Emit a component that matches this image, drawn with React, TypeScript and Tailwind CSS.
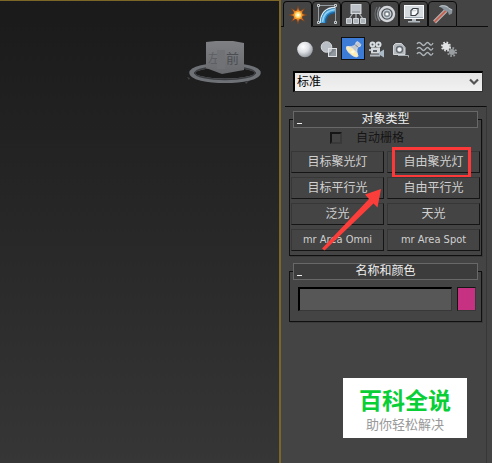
import { useState } from "react";
import type { ReactNode } from "react";
import clsx from "clsx";

type Item = { label: string; icon: ReactNode };

const tabs: Item[] = [
  {
    label: "创建",
    icon: (
      <svg viewBox="0 0 22 22" className="size-[22px]">
        <path
          d="M11 2l1.600 5.200L17.500 4.500 14.800 9.400 20 11l-5.200 1.600 2.700 4.900-4.900-2.700L11 20l-1.600-5.200-4.900 2.700 2.700-4.900L2 11l5.200-1.600L4.500 4.500l4.900 2.700z"
          fill="#dc7426"
          stroke="#6b4024"
          strokeWidth=".8"
        />
        <circle cx="11" cy="11" r="4.500" fill="#f99d2c" />
        <circle cx="11" cy="11" r="3" fill="#ffe07a" />
        <circle cx="11" cy="11" r="1.500" fill="#fffde8" />
      </svg>
    ),
  },
  {
    label: "修改",
    icon: (
      <svg viewBox="0 0 22 22" className="size-[22px]">
        <path d="M2.500 19.500v-17h17v17" fill="none" stroke="#969da2" />
        <path d="M4.500 20C4.500 10 10 4.500 19 4.500" fill="none" stroke="#dcecf5" strokeWidth="1.500" />
        <path d="M7 20C7 12 11.500 7.500 19 7.500" fill="none" stroke="#3f9bd8" strokeWidth="4.500" />
        <path d="M6.500 19C7 11 11 7.500 19 6.500" fill="none" stroke="#8ed0f4" strokeWidth="1.500" />
        <path d="M9.500 20C9.500 13 13 10 19 9.500" fill="none" stroke="#19639e" strokeWidth="1.500" />
        <path d="M1.500 1.500h2v2h-2zM18.500 1.500h2v2h-2zM1.500 18.500h2v2h-2zM18.500 18.500h2v2h-2z" fill="#444" stroke="#c8d0d4" />
      </svg>
    ),
  },
  {
    label: "层次",
    icon: (
      <svg viewBox="0 0 22 22" className="size-[22px]">
        <path d="M8 10l-4 6M11 10v6M14 10l4 6" fill="none" stroke="#aeb4b9" strokeWidth="1.200" />
        <rect x="6" y="1.500" width="10" height="9" fill="#bcc2c7" stroke="#d6dadd" />
        <path d="M7 8h8v2H7z" fill="#9ba1a7" />
        <path d="M1.500 15.500h5v5h-5zM8.500 15.500h5v5h-5zM15.500 15.500h5v5h-5z" fill="#aeb5ba" stroke="#d0d5d9" />
      </svg>
    ),
  },
  {
    label: "运动",
    icon: (
      <svg viewBox="0 0 22 22" className="size-[22px]">
        <path d="M3 4Q-1 11 3 18" fill="none" stroke="#666b70" strokeWidth="1.200" />
        <path d="M6 4Q1 11 6 18" fill="none" stroke="#8c9298" strokeWidth="1.400" />
        <circle cx="13" cy="11" r="7" fill="#4d5156" stroke="#d3d7db" strokeWidth="2.400" />
        <circle cx="13" cy="11" r="3.800" fill="#7f878e" stroke="#cbd4db" strokeWidth="1.300" />
        <circle cx="13" cy="11" r="1.600" fill="#fff" />
      </svg>
    ),
  },
  {
    label: "显示",
    icon: (
      <svg viewBox="0 0 22 22" className="size-[22px]">
        <rect x="1.500" y="2.500" width="19" height="13" fill="#d6dbdf" stroke="#f9fafb" />
        <path d="M2 14.500h18" stroke="#9da8b1" />
        <path d="M9 16h4v2H9zM5 18h12v1.500H5z" fill="#b1b8be" />
        <path d="M8 12.500v-5l2-2h5v4.500l-2.500 2.500z" fill="#f8fafb" stroke="#383e43" strokeWidth="1.200" />
        <path d="M8.500 7.800h4l2-2" fill="none" stroke="#9aa2a8" strokeWidth=".6" />
      </svg>
    ),
  },
  {
    label: "实用程序",
    icon: (
      <svg viewBox="0 0 22 22" className="size-[22px]">
        <path d="M2.500 19L14 7.500" stroke="#b4b2b2" strokeWidth="4" />
        <path d="M2.500 19L14 7.500" stroke="#c76251" strokeWidth="1.800" />
        <path d="M7 3.500C10 1 15 1.500 17.500 5l3 1.500-.5 4-3 1.500-1-3-3.500-1.500L10 5z" fill="#8b959d" />
        <path d="M7.500 3.500C11 2 15 3 17 5.500l3 1.500" fill="none" stroke="#bcc5cc" />
      </svg>
    ),
  },
];

const tools: Item[] = [
  {
    label: "几何体",
    icon: (
      <svg viewBox="0 0 24 24" className="size-6">
        <defs>
          <radialGradient id="ball" cx=".38" cy=".32" r=".72">
            <stop stopColor="#fff" />
            <stop offset=".5" stopColor="#dde0e4" />
            <stop offset="1" stopColor="#8f949c" />
          </radialGradient>
        </defs>
        <circle cx="12" cy="12.500" r="7.800" fill="url(#ball)" />
      </svg>
    ),
  },
  {
    label: "图形",
    icon: (
      <svg viewBox="0 0 24 24" className="size-6">
        <circle cx="9.500" cy="10" r="5.300" fill="#b9bec4" stroke="#d5d9dd" />
        <rect x="11.500" y="11.500" width="8" height="8" fill="#7d838b" stroke="#dfe2e6" />
        <path d="M12 15.500c1.500 0 3-1 3-3.500h-3z" fill="#c5c9ce" />
        <path d="M12 19l7-7v7z" fill="#9298a0" />
      </svg>
    ),
  },
  {
    label: "灯光",
    icon: (
      <svg viewBox="0 0 24 24" className="size-6">
        <path d="M5 9.500c4 .5 7-.5 9.500-2l1-3 2-.5 3 3-.5 2-3 1c-1 3-1 6 .5 10z" fill="#c3c8cd" stroke="#e6e9ec" strokeWidth=".8" />
        <path d="M14.500 7.500l3 2.500" stroke="#70777e" />
        <ellipse cx="11" cy="15" rx="3" ry="7.800" fill="#fdeeb4" stroke="#e8e6dc" transform="rotate(-49 11 15)" />
        <path d="M9 15.500l3-2.500 2 2-2 2z" fill="#fffbe6" />
      </svg>
    ),
  },
  {
    label: "摄影机",
    icon: (
      <svg viewBox="0 0 24 24" className="size-6">
        <circle cx="7.500" cy="7.500" r="3" fill="#d9dde0" />
        <circle cx="13.500" cy="7.500" r="3" fill="#d9dde0" />
        <circle cx="7.500" cy="7.500" r="1" fill="#525860" />
        <circle cx="13.500" cy="7.500" r="1" fill="#525860" />
        <rect x="6" y="10.500" width="9" height="6" fill="#d5d9dc" />
        <path d="M8 13h4v2H8z" fill="#5a6067" />
        <path d="M5 17.500h10v2H5zM4 12h2v2H4z" fill="#b5bbc1" />
        <path d="M14 15.500l5-3v8l-5-3z" fill="#abbac7" />
      </svg>
    ),
  },
  {
    label: "辅助对象",
    icon: (
      <svg viewBox="0 0 24 24" className="size-6">
        <path d="M4.500 17.500v-9l2-2h6l3.500 4v7z" fill="#b3b8bd" stroke="#d4d7da" />
        <circle cx="10.500" cy="12.500" r="3" fill="#f1f2f3" stroke="#626970" strokeWidth="1.500" />
        <path d="M9 18.500h10.500v2" fill="none" stroke="#a9b1b7" />
      </svg>
    ),
  },
  {
    label: "空间扭曲",
    icon: (
      <svg viewBox="0 0 24 24" className="size-6" fill="none" stroke="#adb4b9" strokeWidth="1.300">
        <path d="M4 7c1-2 3-2 4.500 0s2.500 2 4 0 2.500-2 4 0 2.500 1 3.500-1" />
        <path d="M4 12c1-2 3-2 4.500 0s2.500 2 4 0 2.500-2 4 0 2.500 1 3.500-1" />
        <path d="M4 17c1-2 3-2 4.500 0s2.500 2 4 0 2.500-2 4 0 2.500 1 3.500-1" />
      </svg>
    ),
  },
  {
    label: "系统",
    icon: (
      <svg viewBox="0 0 24 24" className="size-6">
        <circle cx="15" cy="15" r="3" fill="#9a9ea1" />
        <circle cx="15" cy="15" r="4" fill="none" stroke="#9a9ea1" strokeWidth="2" strokeDasharray="1.600 1.540" />
        <circle cx="9" cy="9.500" r="3.500" fill="#e1e2e3" />
        <circle cx="9" cy="9.500" r="4" fill="none" stroke="#e1e2e3" strokeWidth="2" strokeDasharray="1.600 1.540" />
      </svg>
    ),
  },
];

const lights = [
  "目标聚光灯",
  "自由聚光灯",
  "目标平行光",
  "自由平行光",
  "泛光",
  "天光",
  "mr Area Omni",
  "mr Area Spot",
];

function Rollout({ title, children }: { title: string; children: ReactNode }) {
  return (
    <section className="relative border border-[#101010] shadow-[1px_1px_0_#3a3a3a]">
      <h2 className="relative mx-[3px] -mt-[9px] h-[17px] border border-[#686868] bg-[#3c3c3c] text-center text-xs leading-[15px] text-[#eeeeee]">
        <span className="absolute bottom-[3px] left-[3px] h-px w-[5px] bg-[#eeeeee]" />
        {title}
      </h2>
      {children}
    </section>
  );
}

function ViewCube() {
  return (
    <svg viewBox="0 0 76 48" className="absolute top-[37px] right-[17px] h-12 w-[76px]">
      <defs>
        <linearGradient id="cube" x1="0" y1="0" x2="0" y2="1">
          <stop stopColor="#7e8083" />
          <stop offset="1" stopColor="#67696d" />
        </linearGradient>
      </defs>
      <ellipse cx="39" cy="35" rx="33.500" ry="7.800" fill="#1b1b1b" stroke="#6e7176" strokeWidth="4.500" />
      <ellipse cx="39" cy="35" rx="30" ry="6.500" fill="none" stroke="#3b3d40" strokeWidth="1.500" />
      <path d="M20 4l10-1h17l11 2v27l-22 4-16-6z" fill="url(#cube)" />
      <text x="22" y="25" fill="#5c5f64" fontSize="12" className="font-['Noto_Sans_CJK_SC',sans-serif]">
        左
      </text>
      <text x="40" y="25" fill="#4b4e53" fontSize="13" className="font-['Noto_Sans_CJK_SC',sans-serif]">
        前
      </text>
      <path d="M31 12h8v19h-8z" fill="#707276" />
      <path d="M1 39l3 1-1 2zM59 44l4-1-3 3zM65 43l3 1" fill="#404246" />
    </svg>
  );
}

export default function App() {
  const [tab, setTab] = useState(0);
  const [tool, setTool] = useState(2);
  const [light, setLight] = useState("");
  const [name, setName] = useState("");

  return (
    <div className="relative flex min-h-screen bg-[#444444] font-['DejaVu_Sans_Condensed','Noto_Sans_CJK_SC',sans-serif] text-xs text-[#d0d0d0]">
      <main className="relative flex-1 border-t border-r-2 border-[#7d6728] bg-linear-to-b from-[#1a1a1a] to-[#363636]">
        <ViewCube />
      </main>

      <aside className="flex w-[211px] flex-col">
        <nav className="flex h-[27px] pt-px">
          <span className="w-0.5 border-b border-[#0c0c0c]" />
          {tabs.map((item, i) => (
            <button
              key={item.label}
              aria-label={item.label}
              onClick={() => setTab(i)}
              className={clsx(
                "flex w-[29px] items-center justify-center rounded-t-sm border-t border-r border-l border-[#0c0c0c]",
                i !== tab && "border-b",
              )}
            >
              {item.icon}
            </button>
          ))}
          <span className="mr-1 flex-1 border-b border-[#0c0c0c]" />
        </nav>

        <div className="flex px-3 pt-2.5">
          {tools.map((item, i) => (
            <button
              key={item.label}
              aria-label={item.label}
              onClick={() => setTool(i)}
              className={clsx(
                "flex h-[23px] w-6 items-center justify-center",
                i === tool && "border border-[#101010] bg-[#3c7bd6]",
              )}
            >
              {item.icon}
            </button>
          ))}
        </div>

        <div className="relative mt-[11px] mr-[9px] ml-3">
          <select
            aria-label="灯光类型"
            className="block h-[21px] w-full appearance-none border-t-2 border-l-2 border-r border-b border-t-black border-l-black border-r-[#333] border-b-[#333] bg-linear-to-b from-[#e6e6e6] to-[#f1f1f1] pl-0.5 text-xs leading-[18px] text-black"
          >
            <option>标准</option>
            <option>光度学</option>
          </select>
          <svg viewBox="0 0 10 8" className="pointer-events-none absolute top-[7px] right-1 h-2 w-2.5">
            <path d="M1 1.500l4 4 4-4" fill="none" stroke="#555" strokeWidth="2.200" />
          </svg>
        </div>

        <div className="mt-3.5 mr-[5px] ml-1 flex flex-1 flex-col gap-[15px] border-t border-r border-t-[#0c0c0c] border-r-[#373737] pt-3 pr-1 pl-1">
          <Rollout title="对象类型">
            <div className="px-px pb-1">
              <label className="flex h-[23px] items-center pl-[39px] text-[#141414]">
                <input
                  type="checkbox"
                  className="mr-3.5 mb-1 size-3 appearance-none border-2 border-t-[#161616] border-r-[#393939] border-b-[#393939] border-l-[#161616] checked:bg-[#999]"
                />
                <span className="mb-1">自动栅格</span>
              </label>
              <div className="grid grid-cols-2 gap-x-[3px] gap-y-1">
                {lights.map((item, i) => (
                  <button
                    key={item}
                    onClick={() => setLight(item)}
                    className={clsx(
                      "relative h-[22px] border border-t-[#373737] border-r-[#151515] border-b-[#151515] border-l-[#373737] leading-5",
                      i > 5 && "text-[11px]",
                      light === item && "bg-[#555]",
                    )}
                  >
                    {item}
                    {i === 1 && (
                      <span className="pointer-events-none absolute -top-[5px] right-2 -bottom-1.5 left-1 border-3 border-[#fc3838]" />
                    )}
                  </button>
                ))}
              </div>
            </div>
            <svg
              viewBox="0 0 60 63"
              className="pointer-events-none absolute bottom-1 left-8 h-[63px] w-[60px]"
            >
              <path d="M59 1L43 6.500l4 4.500L0 60.500 2.500 62.500 51.500 15.500l4 4z" fill="#fc3e3b" />
            </svg>
          </Rollout>

          <Rollout title="名称和颜色">
            <div className="flex gap-[5px] pt-[7px] pr-[5px] pb-2.5 pl-2">
              <input
                aria-label="名称"
                value={name}
                onChange={(e) => setName(e.target.value)}
                className="h-6 min-w-0 flex-1 border-t-2 border-l-2 border-r border-b border-t-black border-l-black border-r-[#383838] border-b-[#383838] bg-[#575757] px-1 outline-none"
              />
              <button
                aria-label="对象颜色"
                className="h-6 w-[19px] border border-t-[#161616] border-r-[#383838] border-b-[#383838] border-l-[#161616] bg-[#c63182]"
              />
            </div>
          </Rollout>
        </div>
      </aside>

      <div className="absolute right-[25px] bottom-[25px] bg-white px-4 pt-2 pb-1 text-center font-['Noto_Sans','Noto_Sans_CJK_SC',sans-serif]">
        <p className="text-[23px] leading-7 font-bold text-[#08cf36]">百科全说</p>
        <p className="text-[13px] leading-5 text-[#999999]">助你轻松解决</p>
      </div>
    </div>
  );
}
